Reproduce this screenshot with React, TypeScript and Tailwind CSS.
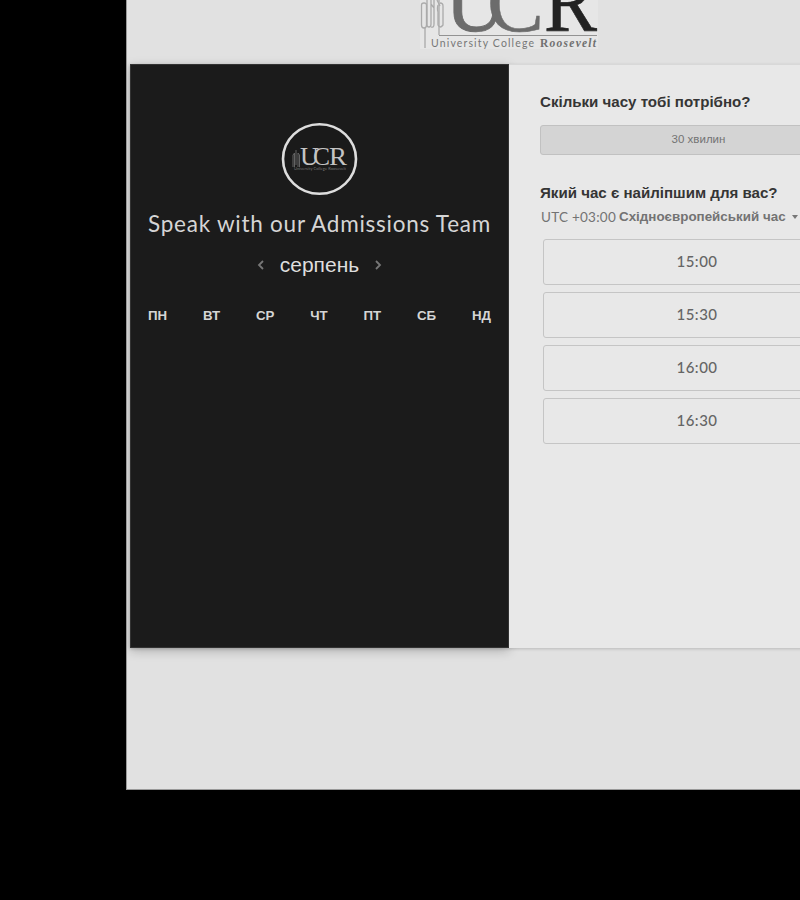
import React from "react";

const days = ["ПН", "ВТ", "СР", "ЧТ", "ПТ", "СБ", "НД"];
const times = ["15:00", "15:30", "16:00", "16:30"];

function HeaderLogo() {
  return (
    <svg className="ml-[289px] block" width="184" height="54" viewBox="416 0 184 54">
      <rect x="420" y="0" width="178" height="49" fill="#e6e6e6" />
      <g fill="none" stroke="#aaa" strokeWidth="1.3">
        <path d="M425 48V28M439 0V35" />
        <path d="M421.500 5Q421.500 3 424 3T426.500 5V25Q426.500 28 424 28T421.500 25Z" />
        <path d="M427 0V25Q427 27 429 27T431 24V4M431 0V4L434 8V24Q434 28 431 27M434 0V8" />
        <path d="M438 5Q437 9 438 12V25Q440 29 443 25V6Q443 3 440 3M437 0L440 6" />
      </g>
      <path d="M439 35.500H597" stroke="#929292" strokeWidth="1" />
      <g fontFamily="'Liberation Serif', serif">
        <text x="445" y="31" fontSize="87" fill="#6c6c6c" stroke="#6c6c6c" strokeWidth="0.8" textLength="61" lengthAdjust="spacingAndGlyphs">U</text>
        <text x="487" y="31" fontSize="87" fill="#6c6c6c" stroke="#6c6c6c" strokeWidth="0.5" textLength="57" lengthAdjust="spacingAndGlyphs">C</text>
        <text x="544" y="31" fontSize="87" fill="#222" stroke="#222" strokeWidth="0.6" textLength="53" lengthAdjust="spacingAndGlyphs">R</text>
        <text x="540" y="47" fontSize="11.500" fontWeight="700" fill="#707070" textLength="56">
          R<tspan fontStyle="italic">oosevelt</tspan>
        </text>
      </g>
      <text x="431" y="47" fontSize="10.500" fill="#777" textLength="103" fontFamily="Lato, sans-serif">University College</text>
    </svg>
  );
}

function RoundLogo() {
  return (
    <svg className="mx-auto mt-[57px] block" width="77" height="74" viewBox="0 0 77 74">
      <ellipse cx="38.500" cy="37" rx="36.500" ry="34.800" fill="#1a1a1a" stroke="#ddd" strokeWidth="2.600" />
      <path d="M12 45V33L13.500 31V45M15 43V28M17 45V31L18.500 33V45" fill="none" stroke="#636363" />
      <g fontFamily="'Liberation Serif', serif" fontSize="25" fill="#c4c4c4">
        <text x="19" y="43" textLength="19" lengthAdjust="spacingAndGlyphs">U</text>
        <text x="32" y="43" textLength="17" lengthAdjust="spacingAndGlyphs">C</text>
        <text x="48" y="43" textLength="18" lengthAdjust="spacingAndGlyphs">R</text>
      </g>
      <text x="13" y="47.500" fontSize="4" fill="#777" textLength="52" fontFamily="Lato, sans-serif">University College Roosevelt</text>
    </svg>
  );
}

function Chevron({ d }: { d: string }) {
  return (
    <svg width="7" height="10" viewBox="0 0 7 10" fill="none" stroke="#777" strokeWidth="1.800">
      <path d={d} />
    </svg>
  );
}

export default function App() {
  return (
    <div className="h-[900px] w-[800px] overflow-hidden bg-black font-['Liberation_Sans',sans-serif]">
      <div className="ml-[126px] h-[790px] w-[674px] overflow-hidden border-b border-l border-[#999] bg-[#e1e1e1]">
        <header className="h-[64px]">
          <HeaderLogo />
        </header>
        <main className="ml-[3px] flex h-[584px] w-[759px] shadow-[0_1px_3px_rgba(0,0,0,0.18)]">
          <section className="h-full w-[379px] shrink-0 border border-[#333] bg-[#1b1b1b] text-[#dedede] shadow-[0_3px_10px_rgba(0,0,0,0.22)]">
            <RoundLogo />
            <h1 className="mt-[12px] text-center font-[Lato,sans-serif] text-[22.500px] leading-[32px] whitespace-nowrap text-[#d5d5d5]">
              <span className="tracking-[0.750px]">Speak with our Admissions Team</span>
            </h1>
            <div className="mt-[10px] flex h-[30px] items-center justify-center gap-[16px]">
              <Chevron d="M6 1L2 5L6 9" />
              <span className="text-[21px] leading-[30px]">серпень</span>
              <Chevron d="M1 1L5 5L1 9" />
            </div>
            <div className="mt-[26px] flex justify-between px-[17px] text-[13.300px] leading-[20px] font-bold text-[#d5d5d5]">
              {days.map((day) => <span key={day}>{day}</span>)}
            </div>
          </section>
          <section className="h-full w-[380px] shrink-0 border-t border-[#d8d8d8] bg-[#e8e8e8] pl-[31px]">
            <h2 className="mt-[27px] text-[15.100px] leading-[20px] font-bold text-[#353535]">Скільки часу тобі потрібно?</h2>
            <div className="mt-[13px] flex h-[30px] w-[317px] items-center justify-center rounded-[3px] border border-[#c1c1c1] bg-[#d4d4d4] text-[11.500px] text-[#737373]">30 хвилин</div>
            <h2 className="mt-[28px] text-[15.100px] leading-[20px] font-bold text-[#353535]">Який час є найліпшим для вас?</h2>
            <div className="mt-[4px] flex h-[20px] items-center text-[13.400px] whitespace-nowrap text-[#737373]">
              <span className="mr-[3px] ml-px font-[Lato,sans-serif] text-[13.500px] tracking-[0.250px]">UTC +03:00</span>
              <b>Східноєвропейський час</b>
              <span className="ml-[6px] border-x-[3.500px] border-t-[4px] border-x-transparent border-t-[#777]" />
            </div>
            <div className="mt-[12px] ml-[3px] flex w-[308px] flex-col gap-[7px]">
              {times.map((time) => (
                <button key={time} className="h-[46px] rounded-[3px] border border-[#c5c5c5] bg-[#e8e8e8] pb-[2px] font-[Lato,sans-serif] text-[15px] font-medium tracking-[0.500px] text-[#656565]">{time}</button>
              ))}
            </div>
          </section>
        </main>
      </div>
    </div>
  );
}
